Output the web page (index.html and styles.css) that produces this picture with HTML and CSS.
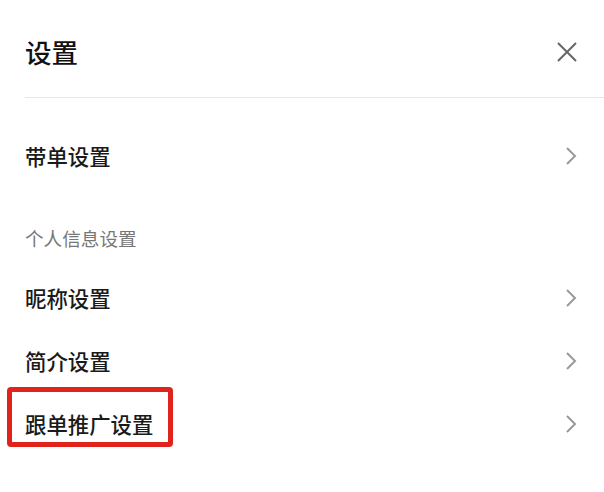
FILE: index.html
```html
<!DOCTYPE html>
<html lang="zh-CN">
<head>
  <meta charset="UTF-8" />
  <meta name="viewport" content="width=device-width, initial-scale=1.0" />
  <title>设置</title>
  <link rel="stylesheet" href="styles.css">
</head>
<body>
  <div class="header">
    <h1>设置</h1>
    <span class="close">
      <svg width="22" height="22" viewBox="0 0 22 22">
        <path d="M2 2 L20 20 M20 2 L2 20" stroke="#666" stroke-width="2" fill="none" />
      </svg>
    </span>
  </div>

  <div class="list">
    <div class="row">
      <span class="label">带单设置</span>
      <span class="arrow">
        <svg width="12" height="20" viewBox="0 0 12 20">
          <path d="M2 2 L10 10 L2 18" stroke="#999" stroke-width="2" fill="none" />
        </svg>
      </span>
    </div>

    <div class="section">个人信息设置</div>

    <div class="row">
      <span class="label">昵称设置</span>
      <span class="arrow">
        <svg width="12" height="20" viewBox="0 0 12 20">
          <path d="M2 2 L10 10 L2 18" stroke="#999" stroke-width="2" fill="none" />
        </svg>
      </span>
    </div>
    <div class="row">
      <span class="label">简介设置</span>
      <span class="arrow">
        <svg width="12" height="20" viewBox="0 0 12 20">
          <path d="M2 2 L10 10 L2 18" stroke="#999" stroke-width="2" fill="none" />
        </svg>
      </span>
    </div>
    <div class="row">
      <span class="label marked">跟单推广设置</span>
      <span class="arrow">
        <svg width="12" height="20" viewBox="0 0 12 20">
          <path d="M2 2 L10 10 L2 18" stroke="#999" stroke-width="2" fill="none" />
        </svg>
      </span>
    </div>
  </div>
</body>
</html>
```

FILE: styles.css
```css
html, body {
  margin: 0;
  padding: 0;
  background: #fff;
  font-family: "Noto Sans CJK SC", "Noto Sans", sans-serif;
}

.header {
  display: flex;
  align-items: center;
  justify-content: space-between;
  height: 72px;
  padding: 16px 25px 9px 0;
  margin-left: 25px;
  border-bottom: 1px solid #e6e6e6;
}

h1 {
  margin: 0;
  font-size: 26.5px;
  font-weight: 500;
  color: #111;
  line-height: 36px;
}

.close {
  display: flex;
  margin-right: 1px;
}

.list {
  padding-top: 26px;
}

.row {
  display: flex;
  align-items: center;
  justify-content: space-between;
  height: 63px;
  padding: 0 27px 0 25px;
}

.label {
  position: relative;
  font-size: 21.4px;
  font-weight: 500;
  line-height: 24px;
  color: #1a1a1a;
}

.arrow {
  display: flex;
}

.section {
  padding: 39px 25px 16px;
  font-size: 18.6px;
  line-height: 24px;
  color: #777;
}

.marked::before {
  content: "";
  position: absolute;
  left: -18px;
  right: -20px;
  top: -25px;
  bottom: -11px;
  border: 5px solid #e0231b;
  border-radius: 4px;
}
```
